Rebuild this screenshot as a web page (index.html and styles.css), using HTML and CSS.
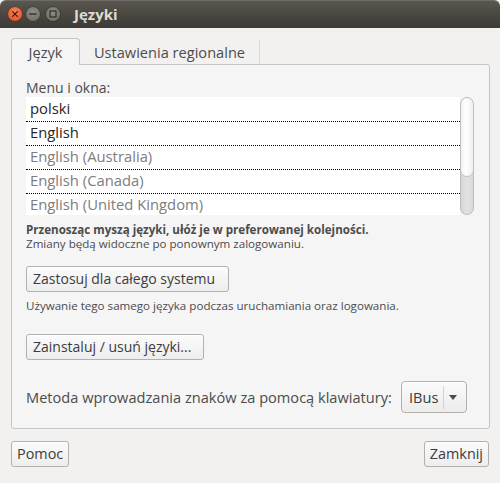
FILE: index.html
```html
<!DOCTYPE html>
<html lang="pl">
<head>
<meta charset="utf-8">
<title>Języki</title>
<link rel="stylesheet" href="styles.css">
</head>
<body>
<div class="window">
  <header class="titlebar">
    <div class="controls">
      <span class="wbtn close">
        <svg width="14" height="14" viewBox="0 0 14 14"><path d="M4.6 4.6 L9.4 9.4 M9.4 4.6 L4.6 9.4" stroke="#3a1a0e" stroke-width="1.2" stroke-linecap="round" fill="none"/></svg>
      </span>
      <span class="wbtn min">
        <svg width="14" height="14" viewBox="0 0 14 14"><path d="M3.5 7 H10.5" stroke="#2f2e2a" stroke-width="1.4" fill="none"/></svg>
      </span>
      <span class="wbtn max">
        <svg width="14" height="14" viewBox="0 0 14 14"><rect x="4" y="4" width="6" height="6" stroke="#2f2e2a" stroke-width="1.2" fill="none"/></svg>
      </span>
    </div>
    <div class="title">Języki</div>
  </header>

  <main class="content">
    <div class="tabs">
      <div class="tab active">Język</div>
      <div class="tab inactive">Ustawienia regionalne</div>
    </div>

    <section class="panel">
      <div class="label">Menu i okna:</div>
      <div class="listwrap">
        <ul class="list">
          <li class="row installed">polski</li>
          <li class="row installed">English</li>
          <li class="row">English (Australia)</li>
          <li class="row">English (Canada)</li>
          <li class="row">English (United Kingdom)</li>
        </ul>
        <div class="scrollbar"><div class="thumb"></div></div>
      </div>

      <p class="hint"><b>Przenosząc myszą języki, ułóż je w preferowanej kolejności.</b><br>Zmiany będą widoczne po ponownym zalogowaniu.</p>

      <button class="btn btn-apply">Zastosuj dla całego systemu</button>

      <p class="note">Używanie tego samego języka podczas uruchamiania oraz logowania.</p>

      <button class="btn btn-install">Zainstaluj / usuń języki...</button>

      <div class="im-row">
        <span class="im-label">Metoda wprowadzania znaków za pomocą klawiatury:</span>
        <div class="combo">
          <span class="combo-text">IBus</span>
          <span class="combo-sep"></span>
          <svg class="combo-arrow" width="8" height="5" viewBox="0 0 8 5"><path d="M0 0 H8 L4 5 Z" fill="#4a4a4a"/></svg>
        </div>
      </div>
    </section>

    <footer class="actions">
      <button class="btn btn-small">Pomoc</button>
      <button class="btn btn-small">Zamknij</button>
    </footer>
  </main>
</div>
</body>
</html>
```

FILE: styles.css
```css
* { box-sizing: border-box; }

html, body {
  margin: 0;
  padding: 0;
  background: #f2f1f0;
}

body {
  font-family: "Open Sans", "Noto Sans", "DejaVu Sans", sans-serif;
  font-size: 14px;
  color: #4c4c4c;
}

.window {
  width: 500px;
  height: 483px;
  background: #f2f1f0;
  display: flex;
  flex-direction: column;
  overflow: hidden;
}

/* ---------- title bar ---------- */
.titlebar {
  height: 28px;
  flex: 0 0 28px;
  display: flex;
  align-items: center;
  background: linear-gradient(#5b5750, #47453f 60%, #3c3b37);
  border-radius: 6px 6px 0 0;
  box-shadow: inset 0 1px 0 rgba(255,255,255,0.12);
}

.controls {
  display: flex;
  align-items: center;
  padding-left: 8px;
  gap: 4px;
}

.wbtn {
  width: 14px;
  height: 14px;
  border-radius: 50%;
  display: flex;
  align-items: center;
  justify-content: center;
}

.wbtn svg { display: block; }

.close {
  background: radial-gradient(circle at 50% 35%, #f6845c, #e95a2e 70%, #d94c22);
  box-shadow: 0 0 0 0.5px #6b2a12;
}

.min, .max {
  background: radial-gradient(circle at 50% 35%, #8f8c85, #77746e 70%, #6a6862);
  box-shadow: 0 0 0 0.5px #2d2c28;
}

.max { margin-left: 2px; }

.title {
  margin-left: 14px;
  color: #dfdbd2;
  font-weight: 700;
  font-size: 15px;
  line-height: 28px;
}

/* ---------- content ---------- */
.content {
  flex: 1;
  display: flex;
  flex-direction: column;
  padding: 10px 10px 0 11px;
}

.tabs {
  display: flex;
  align-items: flex-start;
  height: 26px;
}

.tab {
  font-size: 14.6px;
  line-height: 17px;
  color: #4c4c4c;
  text-align: center;
  white-space: nowrap;
}

.tab.active {
  width: 69px;
  height: 27px;
  padding-top: 5px;
  border: 1px solid #c8c5c0;
  border-bottom: none;
  border-radius: 4px 4px 0 0;
  background: #f5f5f5;
  position: relative;
  z-index: 1;
}

.tab.inactive {
  width: 180px;
  height: 24px;
  margin-top: 2px;
  padding-top: 4px;
  border-right: 1px solid #dcdad6;
}

.panel {
  border: 1px solid #c8c5c0;
  border-radius: 0 3px 3px 3px;
  background: #f5f5f5;
  padding: 14px 15px 15px 14px;
  display: flex;
  flex-direction: column;
  align-items: flex-start;
}

.label {
  line-height: 17px;
  margin-bottom: 1px;
}

.listwrap {
  display: flex;
  width: 448px;
  height: 118px;
}

.list {
  list-style: none;
  margin: 0;
  padding: 1px 0 0 0;
  width: 434px;
  height: 118px;
  overflow: hidden;
  background: #ffffff;
}

.row {
  font-size: 14.8px;
  line-height: 20px;
  height: 24px;
  padding: 0 0 3px 4px;
  border-bottom: 1px dotted #000000;
  color: #7d7d7d;
  white-space: nowrap;
}

.row:last-child { height: 22px; border-bottom: none; }

.row.installed { color: #262626; }

.scrollbar {
  width: 14px;
  height: 118px;
  border: 1px solid #bfbdba;
  border-radius: 7px;
  background: linear-gradient(90deg, #d6d6d6, #e2e2e2 50%, #d8d8d8);
  overflow: hidden;
}

.thumb {
  height: 80px;
  margin: -1px -1px 0 -1px;
  border: 1px solid #c4c2bf;
  border-radius: 7px;
  background: linear-gradient(90deg, #f2f2f2, #ffffff 40%, #f0f0f0);
}

.hint {
  margin: 8px 0 0 0;
  font-size: 11.6px;
  line-height: 14px;
  color: #4c4c4c;
}

.hint b { font-weight: 700; }

.btn {
  font-family: inherit;
  font-size: 14px;
  color: #3c3c3c;
  height: 26px;
  line-height: 24px;
  padding: 0 6px;
  border: 1px solid #b4b1ac;
  border-radius: 3px;
  background: linear-gradient(#fbfbfb, #ededed);
  box-shadow: inset 0 1px 0 #ffffff;
  cursor: default;
  white-space: nowrap;
}

.btn-apply {
  margin-top: 15px;
  width: 203px;
  text-align: left;
}

.note {
  margin: 7px 0 0 0;
  font-size: 11.6px;
  line-height: 14px;
}

.btn-install {
  margin-top: 21px;
  width: 178px;
  text-align: left;
}

.im-row {
  margin-top: 21px;
  display: flex;
  align-items: center;
  width: 441px;
}

.im-label {
  font-size: 14.6px;
  line-height: 17px;
  flex: 1;
  white-space: nowrap;
}

.combo {
  width: 66px;
  height: 32px;
  display: flex;
  align-items: center;
  padding-left: 7px;
  border: 1px solid #b4b1ac;
  border-radius: 4px;
  background: linear-gradient(#fbfbfb, #ececec);
  box-shadow: inset 0 1px 0 #ffffff;
  color: #3c3c3c;
}

.combo-text { font-size: 14.6px; line-height: 17px; }

.combo-sep {
  width: 1px;
  height: 23px;
  margin-left: 5px;
  background: #d4d2ce;
}

.combo-arrow {
  margin-left: 5px;
  display: block;
}

.actions {
  margin-top: 12px;
  display: flex;
  justify-content: space-between;
  padding-right: 1px;
}

.btn-small {
  font-size: 14.4px;
  padding: 0 5px;
}
```
